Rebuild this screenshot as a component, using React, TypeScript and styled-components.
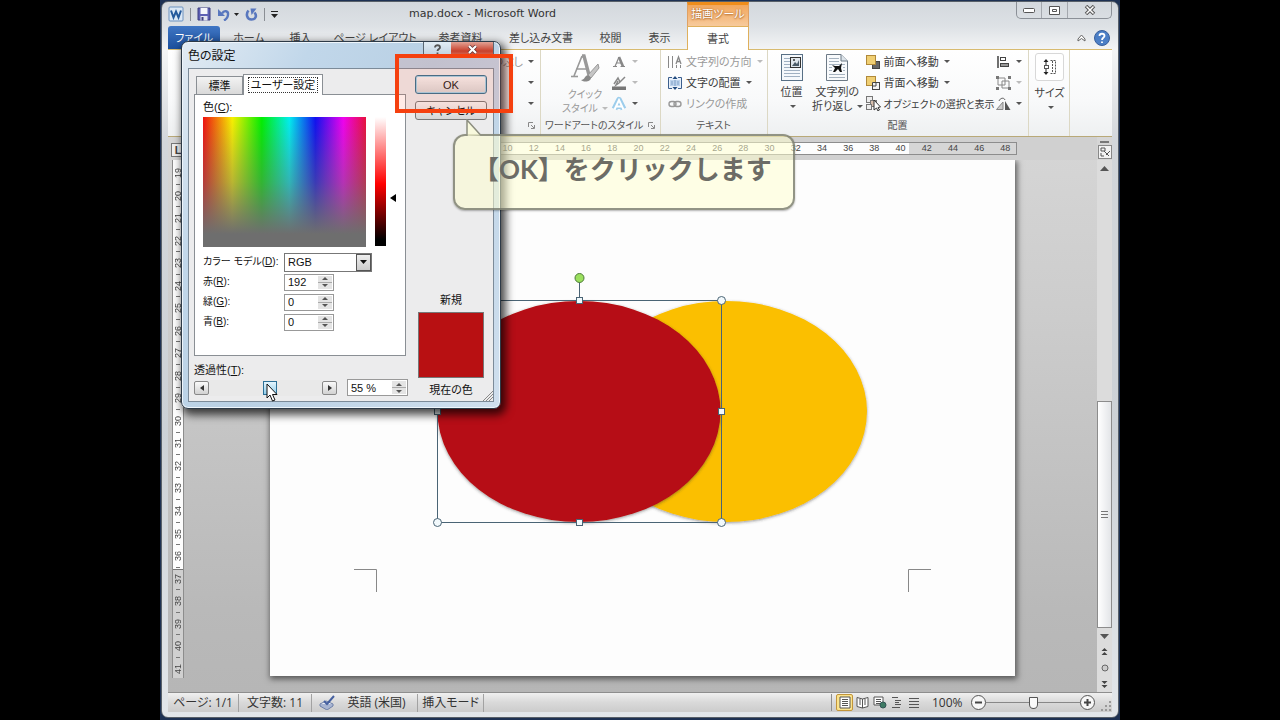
import React from 'react';
import styled, { createGlobalStyle, css } from 'styled-components';

const GlobalStyle = createGlobalStyle`
  * { box-sizing: border-box; }
  body {
    margin: 0;
    background: #000;
    color: #444;
    font: 12px/14px "Open Sans", "Noto Sans CJK JP", sans-serif;
    font-feature-settings: "palt";
  }
  button, input, select { font: inherit; color: inherit; font-feature-settings: inherit; margin: 0; }
  button { padding: 0; border: 0; background: none; white-space: nowrap; }
  svg { display: block; flex: none; }
`;

const Stage = styled.div`
  display: flex;
  justify-content: center;
  min-height: 100vh;
`;

const Desktop = styled.div`
  position: relative;
  display: flex;
  width: 75%;
  min-width: 952px;
  padding: 1px 1px 2px;
  background: #1d3153;
`;

const Frame = styled.main`
  display: flex;
  flex-direction: column;
  flex: 1;
  min-width: 0;
  padding: 0 6px 5px;
  border: 1px solid #586069;
  border-radius: 7px;
  background: linear-gradient(#d3d8dd, #dde1e5 24px, #f4f5f6 48px, #d2d6da 140px, #ccd1d6 60%, #e2e6ea);
`;

/* Title bar */
const TitleBar = styled.header`
  display: flex;
  height: 24px;
`;

const QuickAccess = styled.div`
  display: flex;
  align-items: center;
  gap: 6px;
  width: 110px;
  color: #222;
`;

const IconButton = styled.button`
  display: flex;
  align-items: center;
  gap: 4px;
`;

const Divider = styled.span`
  width: 1px;
  height: 13px;
  background: #8a8e94;
`;

const Title = styled.h1`
  width: 409px;
  margin: 0;
  font: 11px/24px "DejaVu Sans", sans-serif;
  text-align: center;
  color: #333;
`;

const ContextTitle = styled.div`
  width: 62px;
  border: 1px solid #e0a163;
  border-top: 3px solid #ef8d1b;
  border-bottom: 0;
  background: linear-gradient(#f2a75c, #f7ca9c);
  color: #fff;
  font-size: 11px;
  line-height: 18px;
  text-align: center;
  white-space: nowrap;
  text-shadow: 0 0 2px #a8622b, 0 1px 2px #b87333;
`;

const WindowButtons = styled.div`
  display: flex;
  height: 17px;
  margin-left: auto;
  border: 1px solid #8b9097;
  border-top: 0;
  border-radius: 0 0 5px 5px;
`;

const WindowButton = styled.button<{ $w: number }>`
  display: grid;
  place-items: center;
  width: ${p => p.$w}px;
  & + & { border-left: 1px solid #a4a8ae; }
`;

/* Ribbon tabs */
const TabRow = styled.nav`
  display: flex;
  height: 24px;
  border-bottom: 1px solid #d8bb70;
  font-size: 11px;
`;

const FileTab = styled.button`
  width: 52px;
  margin-right: 2px;
  border-radius: 3px 3px 0 0;
  background: linear-gradient(#3f76c4, #1c4f9c);
  color: #fff;
`;

const RibbonTab = styled.button<{ $w: number; $active?: boolean }>`
  width: ${p => p.$w}px;
  ${p => p.$active && css`
    height: 24px;
    margin-left: 3px;
    border: 1px solid #dfb05c;
    border-bottom: 0;
    background: #fff;
  `}
`;

const TabTools = styled.div`
  display: flex;
  align-items: center;
  gap: 8px;
  margin-left: auto;
  padding-right: 2px;
`;

/* Ribbon */
const Ribbon = styled.section`
  display: flex;
  height: 87px;
  border-bottom: 1px solid #b9a978;
  background: linear-gradient(#fff, #f8f9fa 60%, #eef0f1);
`;

const Group = styled.div<{ $w: number }>`
  display: flex;
  flex-direction: column;
  width: ${p => p.$w}px;
  border-right: 1px solid #dcd8c4;
  overflow: hidden;
`;

const GroupBody = styled.div<{ $pad?: number; $end?: boolean }>`
  display: flex;
  justify-content: ${p => (p.$end ? 'flex-end' : 'flex-start')};
  height: 67px;
  padding: 1px 6px 0 ${p => p.$pad ?? 6}px;
`;

const GroupLabel = styled.div`
  display: flex;
  justify-content: center;
  align-items: center;
  height: 16px;
  padding: 0 5px 0 4px;
  font-size: 10px;
  color: #555;
  white-space: nowrap;
  span { flex: 1; }
`;

const BigButton = styled.button<{ $w: number; $dim?: boolean }>`
  display: flex;
  flex-direction: column;
  align-items: center;
  width: ${p => p.$w}px;
  padding-top: 3px;
  line-height: 14px;
  color: ${p => (p.$dim ? '#999' : '#444')};
  font-size: ${p => (p.$dim ? 10 : 11)}px;
  svg { margin-bottom: 4px; }
`;

const Caption = styled.span`
  display: flex;
  justify-content: center;
  align-items: center;
  gap: 2px;
  min-height: 14px;
`;

const Rows = styled.div<{ $w?: number }>`
  display: flex;
  flex-direction: column;
  width: ${p => (p.$w ? `${p.$w}px` : 'auto')};
`;

const RowButton = styled.button<{ $dim?: boolean; $small?: boolean; $end?: boolean }>`
  display: flex;
  align-items: center;
  justify-content: ${p => (p.$end ? 'flex-end' : 'flex-start')};
  gap: 3px;
  height: 21px;
  color: ${p => (p.$dim ? '#999' : '#3c3c3c')};
  font-size: ${p => (p.$small ? 10 : 11)}px;
`;

const Caret = styled.i<{ $dim?: boolean }>`
  width: 0;
  height: 0;
  margin-left: 2px;
  border: 3px solid transparent;
  border-top-color: ${p => (p.$dim ? '#bbb' : '#555')};
  border-bottom: 0;
`;

const SizeTile = styled.span`
  display: grid;
  place-items: center;
  width: 29px;
  height: 28px;
  margin-bottom: 5px;
  border: 1px solid #d8d8d8;
  border-radius: 3px;
  background: #fff;
  svg { margin: 0; }
`;

/* Workspace */
const Workspace = styled.section`
  display: grid;
  grid-template-columns: 17px 1fr 15px;
  grid-template-rows: 23px 1fr;
  flex: 1;
  min-height: 555px;
  background: linear-gradient(#d6d6d6, #cdcdcd 30%, #b9b9b9 85%, #b6b6b6);
`;

const TabSelector = styled.button`
  width: 14px;
  height: 14px;
  margin: 6px 0 0 3px;
  border: 1px solid #777;
  background: #f0f0f0;
  font: bold 11px/12px "Liberation Sans", sans-serif;
`;

const RulerSlot = styled.div`
  display: flex;
  justify-content: center;
  padding: 5px 0 0 4px;
  background: #d0d0d0;
`;

const HorizontalRuler = styled.div`
  display: flex;
  justify-content: space-between;
  width: 747px;
  height: 13px;
  padding: 0 2px 0 98px;
  border: 1px solid #8d8d8d;
  background: linear-gradient(90deg, #d6d6d6 106px, #fdfdfd 106px, #fdfdfd 638px, #d6d6d6 638px);
  font: 9px/11px "Liberation Sans", sans-serif;
  color: #444;
  span { width: 16px; text-align: center; }
`;

const VerticalRuler = styled.div`
  display: flex;
  flex-direction: column;
  justify-content: space-between;
  width: 12px;
  height: 518px;
  margin-left: 4px;
  padding: 7px 0 3px;
  border: solid #8d8d8d;
  border-width: 0 1px;
  background: linear-gradient(#fdfdfd 409px, #777 409px, #777 410px, #d0d0d0 410px);
  font: 9px/10px "Liberation Sans", sans-serif;
  color: #444;
  span {
    height: 12px;
    writing-mode: vertical-rl;
    transform: rotate(180deg);
    text-align: center;
  }
  i { width: 4px; height: 1px; margin-left: 3px; background: #777; }
`;

const Canvas = styled.div`
  display: flex;
  justify-content: center;
  align-items: flex-start;
  padding-left: 2px;
`;

const Page = styled.article`
  width: 745px;
  height: 516px;
  background: #fdfdfd;
  box-shadow: 1px 2px 6px 1px #555;
  clip-path: inset(0 -12px -12px);
`;

const ScrollColumn = styled.div`
  display: flex;
  flex-direction: column;
  align-items: center;
  background: #dcdcdc;
  button { display: grid; place-items: center; width: 15px; height: 16px; flex: none; }
`;

const ScrollTrack = styled.div`
  display: flex;
  flex-direction: column;
  justify-content: flex-end;
  flex: 1;
  width: 15px;
`;

const ScrollThumb = styled.div`
  display: grid;
  place-items: center;
  height: 227px;
  border: 1px solid #8c8c8c;
  background: linear-gradient(90deg, #fff, #e3e5e8);
`;

const RulerToggle = styled.button`
  display: grid;
  place-items: center;
  align-self: end;
  width: 15px;
  height: 20px;
  &::before { content: ""; width: 9px; height: 2px; background: #777; }
`;

/* Status bar */
const StatusBar = styled.footer`
  display: flex;
  align-items: center;
  height: 20px;
  border-top: 1px solid #8e8e8e;
  background: linear-gradient(#f0f0f0, #d9d9d9 50%, #cccccc);
  color: #333;
`;

const StatusItem = styled.button<{ $w: number }>`
  width: ${p => p.$w}px;
  height: 18px;
  border-right: 1px solid #a2a2a2;
  text-align: center;
`;

const ProofButton = styled.button`
  padding-left: 7px;
`;

const ViewButtons = styled.div`
  display: flex;
  margin-left: auto;
  padding-left: 4px;
  border-left: 1px solid #8e8e8e;
`;

const ViewButton = styled.button<{ $on?: boolean }>`
  display: grid;
  place-items: center;
  width: 17px;
  height: 17px;
  margin-right: ${p => (p.$on ? 1 : 0)}px;
  border-radius: 2px;
  ${p => p.$on && css`border: 1px solid #c2953a; background: #fbe38c;`}
`;

const Zoom = styled.label`
  width: 39px;
  margin-left: 10px;
`;

const ZoomRange = styled.input`
  appearance: none;
  width: 94px;
  height: 14px;
  margin: 0;
  background: linear-gradient(#888, #888) center / 100% 1px no-repeat;
  &::-webkit-slider-thumb {
    appearance: none;
    width: 9px;
    height: 12px;
    border: 1px solid #555;
    border-radius: 1px 1px 5px 5px;
    background: #fafafa;
  }
`;

const RoundButton = styled.button`
  display: grid;
  place-items: center;
  width: 15px;
  height: 15px;
  border: 1px solid #555;
  border-radius: 50%;
  background: #f7f7f7;
`;

const CornerGrip = styled.span`
  align-self: flex-end;
  margin-left: 6px;
`;

/* Colour dialog */
const Dialog = styled.section`
  position: absolute;
  left: 21px;
  top: 41px;
  width: 320px;
  height: 368px;
  padding: 0 6px 6px;
  border: 1px solid #2d3a47;
  border-radius: 7px;
  background: linear-gradient(120deg, #e2ebf3, #c1d7ea 25%, #b9d0e4 50%, #cfdfee);
  box-shadow: 3px 4px 9px 2px rgba(0, 0, 0, .7), inset 0 0 0 1px #eef5fb;
  color: #111;
  font: 11px/14px "Liberation Sans", "Noto Sans CJK JP", sans-serif;
  font-feature-settings: "palt";
`;

const DialogHead = styled.header`
  display: flex;
  justify-content: space-between;
  height: 26px;
`;

const DialogTitle = styled.h2`
  margin: 0;
  font: 12px/25px "Noto Sans CJK JP", sans-serif;
  font-feature-settings: "palt";
`;

const DialogHeadButtons = styled.div`
  display: flex;
  height: 16px;
  border: 1px solid #5c6772;
  border-top: 0;
  border-radius: 0 0 4px 4px;
  overflow: hidden;
`;

const HeadButton = styled.button<{ $w: number; $red?: boolean }>`
  display: grid;
  place-items: center;
  width: ${p => p.$w}px;
  background: ${p => (p.$red ? 'linear-gradient(#e2a295, #c8402c 60%, #d97b66)' : 'linear-gradient(#e3edf5, #bccddc)')};
`;

const DialogBody = styled.form`
  display: flex;
  justify-content: space-between;
  height: 334px;
  padding: 6px 6px 0 5px;
  border: 1px solid #7c8b99;
  background: #ececed;
`;

const LeftPane = styled.div`
  display: flex;
  flex-direction: column;
  width: 214px;
`;

const DialogTabs = styled.div`
  display: flex;
  align-items: flex-end;
  height: 19px;
  padding-left: 2px;
`;

const DialogTab = styled.button<{ $w: number; $on?: boolean }>`
  position: relative;
  width: ${p => p.$w}px;
  height: 18px;
  border: 1px solid #8a8f94;
  border-bottom: 0;
  background: linear-gradient(#f3f3f3, #d9d9d9);
  ${p => p.$on && css`
    height: 21px;
    margin-bottom: -1px;
    padding: 2px 4px;
    background: #fff;
    span { display: block; border: 1px dotted #333; }
  `}
`;

const TabPanel = styled.div`
  width: 212px;
  height: 262px;
  padding: 5px 8px;
  border: 1px solid #8a8f94;
  background: #fff;
`;

const PickerRow = styled.div`
  display: flex;
  align-items: flex-start;
  gap: 9px;
  margin: 3px 0 5px;
`;

const Spectrum = styled.div`
  width: 163px;
  height: 130px;
  background:
    linear-gradient(rgba(110, 110, 110, 0), rgba(110, 110, 110, .45) 50%, #6e6e6e 90%),
    linear-gradient(90deg, #f01010, #f8f000 18%, #00f000 36%, #00eef0 53%, #1010f0 69%, #f000f0 86%, #e8103c);
`;

const Luminance = styled.div`
  width: 11px;
  height: 129px;
  background: linear-gradient(#fff, #f00 52%, #000 95%);
`;

const LuminanceMark = styled.i`
  margin: 77px 0 0 -5px;
  border: 4px solid transparent;
  border-left: 0;
  border-right: 6px solid #000;
`;

const Field = styled.div`
  display: flex;
  align-items: center;
  height: 20px;
  label { width: 81px; font-size: 10px; white-space: nowrap; }
`;

const SelectWrap = styled.span`
  position: relative;
  display: flex;
`;

const ModelSelect = styled.select`
  width: 88px;
  height: 19px;
  padding: 0 3px;
  appearance: none;
  border: 1px solid #777;
  border-radius: 0;
  background: #fff;
`;

const DropMark = styled.span`
  position: absolute;
  top: 1px;
  right: 1px;
  display: grid;
  place-items: center;
  width: 15px;
  height: 17px;
  border: 1px solid #555;
  background: linear-gradient(#eee, #ccc);
  pointer-events: none;
`;

const Spinner = styled.span<{ $w: number }>`
  display: flex;
  width: ${p => p.$w}px;
  height: 17px;
  padding: 1px;
  border: 1px solid #999;
  background: #fff;
  input {
    flex: 1;
    min-width: 0;
    padding: 0 0 0 2px;
    border: 0;
    outline: 0;
    background: none;
  }
`;

const Arrows = styled.span`
  display: flex;
  flex-direction: column;
  gap: 1px;
  width: 14px;
  background: #aaa;
  button { display: grid; place-items: center; flex: 1; background: #e4e4e4; }
`;

const TransparencyLabel = styled.label`
  margin: 7px 0 2px;
`;

const TransparencyRow = styled.div`
  display: flex;
  align-items: center;
  justify-content: space-between;
`;

const SliderGroup = styled.div`
  display: flex;
  align-items: center;
  width: 143px;
`;

const StepButton = styled.button`
  display: grid;
  place-items: center;
  width: 15px;
  height: 14px;
  border: 1px solid #888;
  border-radius: 2px;
  background: linear-gradient(#fafafa, #d2d2d2);
`;

const Slider = styled.input`
  appearance: none;
  flex: 1;
  min-width: 0;
  height: 16px;
  margin: 0;
  background: #e9e9e9;
  &::-webkit-slider-thumb {
    appearance: none;
    width: 14px;
    height: 14px;
    border: 1px solid #2b6f96;
    background: linear-gradient(#e4f5fd, #8fcdec);
  }
`;

const RightPane = styled.div`
  display: flex;
  flex-direction: column;
  align-items: center;
  width: 72px;
`;

const PushButton = styled.button<{ $default?: boolean }>`
  width: 72px;
  height: 19px;
  margin-bottom: 7px;
  border: 1px solid ${p => (p.$default ? '#2f6f8f' : '#777')};
  border-radius: 3px;
  background: linear-gradient(#f6f6f6, #d6d6d6);
  ${p => p.$default && css`box-shadow: inset 0 0 0 1px #9dd3ea;`}
`;

const Swatches = styled.div`
  display: flex;
  flex-direction: column;
  align-items: center;
  gap: 5px;
  margin-top: 166px;
  white-space: nowrap;
`;

const Swatch = styled.div`
  width: 66px;
  height: 66px;
  border: 1px solid #777;
  background: #b81012;
`;

const ResizeGrip = styled.span`
  position: absolute;
  right: 7px;
  bottom: 7px;
`;

/* Tutorial overlays */
const Highlight = styled.div`
  position: absolute;
  left: 235px;
  top: 54px;
  width: 118px;
  height: 59px;
  border: 4px solid #f5400f;
  background: rgba(255, 90, 60, .13);
`;

const Callout = styled.aside`
  position: absolute;
  left: 293px;
  top: 134px;
  width: 342px;
  height: 76px;
  padding: 18px 0 0 18px;
  border: 2px solid rgba(110, 112, 100, .75);
  border-radius: 12px;
  background: rgba(255, 255, 208, .52);
  box-shadow: 0 1px 2px rgba(0, 0, 0, .3);
  color: #6c6c66;
  font: bold 26px/30px Lato, "Noto Sans CJK JP", sans-serif;
  font-feature-settings: normal;
  white-space: nowrap;
`;

const CalloutTail = styled.span`
  position: absolute;
  left: 11px;
  top: -17px;
`;

const Pointer = styled.span`
  position: absolute;
  left: 106px;
  top: 383px;
`;

const Tri = ({ up, color = '#555', w = 7, h = 4 }: { up?: boolean; color?: string; w?: number; h?: number }) => (
  <svg width={w} height={h} viewBox="0 0 8 4" preserveAspectRatio="none">
    <path d={up ? 'M0 4L4 0L8 4Z' : 'M0 0L4 4L8 0Z'} fill={color} />
  </svg>
);

const WordIcon = () => (
  <svg width="16" height="16" viewBox="0 0 16 16">
    <rect x="1" y="1" width="14" height="14" rx="1" fill="#dbe8f5" stroke="#6d93c0" />
    <path d="M3 4.500L5.500 11.500L8 5.500L10.500 11.500L13 4.500" fill="none" stroke="#245a9c" strokeWidth="2" />
  </svg>
);

const SaveIcon = () => (
  <svg width="14" height="14" viewBox="0 0 14 14">
    <path d="M1 1H13V13H1Z" fill="#5d5fb4" stroke="#3d3f80" />
    <rect x="3.500" y="1" width="7" height="6" fill="#f4f5fb" />
    <rect x="3.500" y="9" width="7" height="4.500" fill="#e1e3f0" />
    <rect x="4.500" y="10" width="2" height="3.500" fill="#3d3f80" />
  </svg>
);

const UndoIcon = () => (
  <svg width="13" height="13" viewBox="0 0 13 13">
    <path d="M5 5.500C7 2 11.500 2.500 11 6.500C11 9 9.500 11 7 12.500" fill="none" stroke="#5877be" strokeWidth="2.400" />
    <path d="M1 1V8H8Z" fill="#5877be" />
  </svg>
);

const RedoIcon = () => (
  <svg width="13" height="13" viewBox="0 0 13 13">
    <path d="M3.500 2.500C0.500 6 2 11.500 6.500 11.500C11 11.500 12 7.500 9.500 4.500" fill="none" stroke="#5877be" strokeWidth="2.600" />
    <path d="M5.500 0.500H11.500L6.500 7Z" fill="#5877be" />
  </svg>
);

const QuickStyleIcon = () => (
  <svg width="30" height="29" viewBox="0 0 30 29">
    <path d="M12 2L4 22M6 15H16" fill="none" stroke="#999" strokeWidth="1.600" />
    <path d="M12 2H14L19 21" fill="none" stroke="#999" strokeWidth="3.400" />
    <path d="M1 22.500H8" stroke="#999" strokeWidth="1.600" />
    <path d="M28 10L18 21L21 24L29 14Z" fill="#c5c5c5" stroke="#999" />
    <path d="M18 21C14 22 15 26 11 26C15 29 21 27 21 24Z" fill="#888" />
  </svg>
);

const LetterIcon = ({ kind }: { kind: 'fill' | 'outline' | 'glow' }) => (
  <svg width="16" height="16" viewBox="0 0 16 16">
    {kind === 'fill' && <><path d="M8 3L4 12.500M5.500 9H10.500M2 12.500H6M9.500 12.500H14" fill="none" stroke="#888" strokeWidth="1.200" /><path d="M8 3L12 12.500" stroke="#888" strokeWidth="2.600" /></>}
    {kind === 'outline' && <><path d="M3 9L7 3L9 7M14 2L8 8L5 10L7 6" fill="none" stroke="#888" strokeWidth="1.500" /><rect x="1" y="11.500" width="14" height="3.500" fill="#777" /></>}
    {kind === 'glow' && <><path d="M3.500 13L8 4L12.500 13M5.500 10H10.500" fill="none" stroke="#9ccdec" strokeWidth="6" strokeLinejoin="round" /><path d="M3.500 13.500L8 4L12.500 13.500M5.500 10.500H10.500" fill="none" stroke="#fff" strokeWidth="2" /></>}
  </svg>
);

const TextDirectionIcon = () => (
  <svg width="16" height="14" viewBox="0 0 16 14">
    <path d="M1.500 1V13M5.500 1V13M9.500 10V13M13.500 10V13" stroke="#888" />
    <path d="M9 9L11.500 2L14 9M10 6.500H13" fill="none" stroke="#888" strokeWidth="1.300" />
  </svg>
);

const TextAlignIcon = () => (
  <svg width="16" height="14" viewBox="0 0 16 14">
    <rect x="1.500" y="1.500" width="13" height="11" fill="#e8f0fa" />
    <path d="M5 1.500H1.500V12.500H5M11 1.500H14.500V12.500H11" fill="none" stroke="#3c5f8e" />
    <rect x="3" y="4" width="10" height="6" fill="#bcd2ec" />
    <path d="M5 5V9M11 5V9M8 4V10" stroke="#7f9fc6" />
    <path d="M8 0L5.500 3H10.500ZM8 14L5.500 11H10.500Z" fill="#234c80" />
  </svg>
);

const LinkIcon = () => (
  <svg width="16" height="10" viewBox="0 0 16 10">
    <rect x="2" y="2.500" width="7" height="5" rx="2.500" fill="none" stroke="#999" strokeWidth="1.400" />
    <rect x="7" y="2.500" width="7" height="5" rx="2.500" fill="none" stroke="#999" strokeWidth="1.400" />
  </svg>
);

const PositionIcon = () => (
  <svg width="22" height="27" viewBox="0 0 22 27">
    <rect x="0.500" y="0.500" width="21" height="26" fill="#f4f8fc" stroke="#587086" />
    <path d="M3 4.500H9M3 7.500H9M3 10.500H9M3 13.500H9M3 16.500H19M3 19.500H19M3 22.500H19" stroke="#9fb0c2" />
    <rect x="9.500" y="3.500" width="10" height="10" fill="#dfe6ec" stroke="#333" />
    <path d="M11 12L14 8L16 10L18 6V12Z" fill="#4b5b68" />
    <circle cx="13" cy="6" r="1" fill="#333" />
  </svg>
);

const WrapIcon = () => (
  <svg width="22" height="27" viewBox="0 0 22 27">
    <path d="M0.500 0.500H15L21.500 7V26.500H0.500Z" fill="#f8fafc" stroke="#6d7a86" />
    <path d="M15 0.500V7H21.500" fill="#dde4ea" stroke="#6d7a86" />
    <path d="M3 4.500H13M3 7.500H13M3 10.500H19M3 13.500H6M17 13.500H19M3 16.500H6M17 16.500H19M3 20.500H19M3 23.500H19" stroke="#a5b2bf" />
    <path d="M6 11L9 12L13 12L16 9L15 14L16 18H14L12 15L9 18H7L9 14Z" fill="#111" />
  </svg>
);

const LayerIcon = ({ back }: { back?: boolean }) => (
  <svg width="15" height="14" viewBox="0 0 15 14">
    <rect x="6.500" y="6.500" width="7" height="7" fill={back ? '#f4f4f4' : '#666'} stroke="#444" />
    <rect x="0.500" y="0.500" width="9" height="9" fill="#f0cf73" stroke="#b0893a" />
    {back && <path d="M6.500 10V6.500H10V10Z" fill="#f4f4f4" stroke="#444" />}
  </svg>
);

const SelectPaneIcon = () => (
  <svg width="15" height="15" viewBox="0 0 15 15">
    <rect x="0.500" y="0.500" width="6" height="6" fill="#eee" stroke="#777" />
    <rect x="4.500" y="4.500" width="6" height="6" fill="#d8bfae" stroke="#777" />
    <rect x="0.500" y="8.500" width="5" height="5" fill="#eee" stroke="#777" />
    <path d="M8 4V14L10.500 12L12 15L13.500 14L12 11.500L14.500 11Z" fill="#fff" stroke="#333" />
  </svg>
);

const ArrangeIcon = ({ kind }: { kind: 'align' | 'group' | 'rotate' }) => (
  <svg width="15" height="14" viewBox="0 0 15 14">
    {kind === 'align' && <><path d="M2 1V13" stroke="#333" strokeWidth="1.400" /><rect x="4.500" y="2.500" width="5" height="3" fill="#fff" stroke="#444" /><rect x="4.500" y="8.500" width="8" height="3" fill="#999" stroke="#444" /></>}
    {kind === 'group' && <><path d="M2 2H9V9H2ZM6 5H13V12H6Z" fill="none" stroke="#888" /><path d="M0 0H3V3H0ZM12 0H15V3H12ZM0 11H3V14H0ZM12 11H15V14H12Z" fill="#777" /></>}
    {kind === 'rotate' && <><path d="M7 5V12.500H0.500Z" fill="#ccc" stroke="#888" /><path d="M9 4L14.500 13H9Z" fill="#555" /><path d="M3 4C4 1 8 0 9 3" fill="none" stroke="#666" /></>}
  </svg>
);

const SizeIcon = () => (
  <svg width="14" height="16" viewBox="0 0 14 16">
    <path d="M3 0L0.500 3H5.500ZM3 16L0.500 13H5.500Z" fill="#222" />
    <path d="M3 3V6M3 10V13" stroke="#222" />
    <rect x="1.500" y="6.500" width="4" height="3" fill="#fff" stroke="#555" />
    <path d="M7.500 1.500H12.500V14.500H7.500M9.500 2V14" fill="none" stroke="#555" strokeDasharray="2 1" />
  </svg>
);

const Launcher = () => (
  <svg width="7" height="7" viewBox="0 0 7 7">
    <path d="M0.500 5V0.500H5M3 3L6 6M6.500 3V6.500H3" fill="none" stroke="#888" />
  </svg>
);

const viewPaths = [
  'M2 1H12V12H2ZM4 3.500H10M4 5.500H10M4 7.500H10M4 9.500H10',
  'M6.500 3V12M6.500 3L1 1.500V10.500L6.500 12L12 10.500V1.500ZM3 4H5M3 6H5M3 8H5M8 4H10M8 6H10M8 8H10',
  'M1 1H10V9H1ZM3 3.500H8M3 5.500H8M3 7.500H8',
  'M2 1.500H8M5 4.500H11M5 6.500H9M5 8.500H11M2 11.500H10',
  'M2 2.500H12M2 5.500H12M2 8.500H12M2 11.500H12',
];
const viewNames = ['印刷レイアウト', '全画面閲覧', 'Web レイアウト', 'アウトライン', '下書き'];

const ViewIcon = ({ i }: { i: number }) => (
  <svg width="14" height="13" viewBox="0 0 14 13">
    <path d={viewPaths[i]} fill={i < 3 ? '#fff' : 'none'} stroke="#555" />
    {i === 2 && <circle cx="10" cy="9" r="3" fill="#3d7a63" stroke="#355" />}
  </svg>
);

const ProofIcon = () => (
  <svg width="17" height="15" viewBox="0 0 17 15">
    <path d="M1 9L7 6L14 9L8 13Z" fill="#eef2fa" stroke="#6d7fa8" />
    <path d="M1 9V11L8 15L14 11V9" fill="#a8b5d2" stroke="#6d7fa8" />
    <path d="M5 6L8 9L15 1" fill="none" stroke="#4560a0" strokeWidth="2" />
  </svg>
);

const SpinArrows = ({ name }: { name: string }) => (
  <Arrows>
    <button type="button" aria-label={`${name} +`}><Tri up w={6} h={3} /></button>
    <button type="button" aria-label={`${name} -`}><Tri w={6} h={3} /></button>
  </Arrows>
);

const tabs: [string, number][] = [
  ['ホーム', 54], ['挿入', 49], ['ページ レイアウト', 100], ['参考資料', 71],
  ['差し込み文書', 90], ['校閲', 49], ['表示', 49],
];
const channels: [string, string, string][] = [['赤', 'R', '192'], ['緑', 'G', '0'], ['青', 'B', '0']];
const horizontalMarks = Array.from({ length: 25 }, (_, i) => i * 2);
const verticalMarks = Array.from({ length: 23 }, (_, i) => i + 19);
const squares = [[309, 140], [309, 362], [451, 251], [167, 251]];
const circles = [[451, 140], [167, 362], [451, 362], [167, 140]];

const Drawing = () => (
  <svg width="745" height="516" viewBox="0 0 745 516">
    <defs>
      <filter id="soft" x="-10%" y="-10%" width="120%" height="120%">
        <feDropShadow dx="0" dy="1" stdDeviation="1.500" floodColor="#333" floodOpacity="0.5" />
      </filter>
    </defs>
    <ellipse cx="456" cy="251.500" rx="141" ry="110.500" fill="#fbbf00" filter="url(#soft)" />
    <ellipse cx="309" cy="251.500" rx="141.500" ry="110.500" fill="#b61012" filter="url(#soft)" />
    <path d="M167.500 140.500H451.500V362.500H167.500ZM309.500 118V140" fill="none" stroke="#4a6475" />
    {squares.map(([x, y]) => <rect key={`${x}-${y}`} x={x - 2.5} y={y - 2.5} width="6" height="6" fill="#f2f9fc" stroke="#4a6475" />)}
    {circles.map(([x, y]) => <circle key={`${x}-${y}`} cx={x + 0.5} cy={y + 0.5} r="4" fill="#f2f9fc" stroke="#4a6475" />)}
    <circle cx="309.500" cy="118" r="4.500" fill="#9be05e" stroke="#4d7a3a" />
    <path d="M84 409.500H106.500V432M661 409.500H638.500V432" fill="none" stroke="#888" />
  </svg>
);

export default function App() {
  return (
    <Stage>
      <GlobalStyle />
      <Desktop>
        <Frame>
          <TitleBar>
            <QuickAccess>
              <WordIcon />
              <Divider />
              <IconButton aria-label="上書き保存"><SaveIcon /></IconButton>
              <IconButton aria-label="元に戻す"><UndoIcon /><Tri color="#222" w={5} h={3} /></IconButton>
              <IconButton aria-label="やり直し"><RedoIcon /></IconButton>
              <Divider />
              <IconButton aria-label="クイック アクセスのカスタマイズ">
                <svg width="7" height="7" viewBox="0 0 7 7"><path d="M0 0H7V1H0ZM0 3H7L3.500 7Z" fill="#222" /></svg>
              </IconButton>
            </QuickAccess>
            <Title>map.docx - Microsoft Word</Title>
            <ContextTitle>描画ツール</ContextTitle>
            <WindowButtons>
              <WindowButton $w={24} aria-label="最小化">
                <svg width="12" height="5" viewBox="0 0 12 5"><rect x="0.500" y="0.500" width="11" height="4" rx="1" fill="#fff" stroke="#555" /></svg>
              </WindowButton>
              <WindowButton $w={26} aria-label="最大化">
                <svg width="11" height="9" viewBox="0 0 11 9"><path d="M0.500 0.500H10.500V8.500H0.500ZM3.500 3.500H7.500V5.500H3.500Z" fill="#fff" stroke="#555" /></svg>
              </WindowButton>
              <WindowButton $w={44} aria-label="閉じる">
                <svg width="12" height="10" viewBox="0 0 12 10"><path d="M2 1L10 9M10 1L2 9" stroke="#555" strokeWidth="3.500" /><path d="M2.500 1.500L9.500 8.500M9.500 1.500L2.500 8.500" stroke="#fff" strokeWidth="1.500" /></svg>
              </WindowButton>
            </WindowButtons>
          </TitleBar>

          <TabRow>
            <FileTab>ファイル</FileTab>
            {tabs.map(([name, w]) => <RibbonTab key={name} $w={w}>{name}</RibbonTab>)}
            <RibbonTab $w={62} $active>書式</RibbonTab>
            <TabTools>
              <IconButton aria-label="リボンの最小化">
                <svg width="9" height="8" viewBox="0 0 9 8"><path d="M1 5L4.500 1L8 5V7L4.500 4.500L1 7Z" fill="#fff" stroke="#666" /></svg>
              </IconButton>
              <IconButton aria-label="ヘルプ">
                <svg width="16" height="16" viewBox="0 0 16 16"><circle cx="8" cy="8" r="7.500" fill="#4c7fc6" stroke="#385f9c" /><path d="M5.500 6C5.500 3 10.500 3 10.500 6C10.500 7.500 8 7.500 8 10M8 11.500V13" fill="none" stroke="#fff" strokeWidth="1.800" /></svg>
              </IconButton>
            </TabTools>
          </TabRow>

          <Ribbon>
            <Group $w={373}>
              <GroupBody $end>
                <Rows>
                  <RowButton $end $dim>塗りつぶし<Caret /></RowButton>
                  <RowButton $end aria-label="図形の枠線"><Caret /></RowButton>
                  <RowButton $end aria-label="図形の効果"><Caret /></RowButton>
                </Rows>
              </GroupBody>
              <GroupLabel><span /><Launcher /></GroupLabel>
            </Group>
            <Group $w={120}>
              <GroupBody $pad={18}>
                <BigButton $w={52} $dim>
                  <QuickStyleIcon />
                  <Caption>クイック</Caption>
                  <Caption>スタイル<Caret $dim /></Caption>
                </BigButton>
                <Rows>
                  <RowButton aria-label="文字の塗りつぶし"><LetterIcon kind="fill" /><Caret $dim /></RowButton>
                  <RowButton aria-label="文字の輪郭"><LetterIcon kind="outline" /><Caret $dim /></RowButton>
                  <RowButton aria-label="文字の効果"><LetterIcon kind="glow" /><Caret /></RowButton>
                </Rows>
              </GroupBody>
              <GroupLabel><span>ワードアートのスタイル</span><Launcher /></GroupLabel>
            </Group>
            <Group $w={107}>
              <GroupBody>
                <Rows>
                  <RowButton $dim><TextDirectionIcon />文字列の方向<Caret $dim /></RowButton>
                  <RowButton><TextAlignIcon />文字の配置<Caret /></RowButton>
                  <RowButton $dim><LinkIcon />リンクの作成</RowButton>
                </Rows>
              </GroupBody>
              <GroupLabel>テキスト</GroupLabel>
            </Group>
            <Group $w={261}>
              <GroupBody>
                <BigButton $w={36}><PositionIcon /><Caption>位置</Caption><Caption><Caret /></Caption></BigButton>
                <BigButton $w={58}><WrapIcon /><Caption>文字列の</Caption><Caption>折り返し<Caret /></Caption></BigButton>
                <Rows $w={134}>
                  <RowButton><LayerIcon />前面へ移動<Caret /></RowButton>
                  <RowButton><LayerIcon back />背面へ移動<Caret /></RowButton>
                  <RowButton $small><SelectPaneIcon />オブジェクトの選択と表示</RowButton>
                </Rows>
                <Rows>
                  <RowButton aria-label="配置"><ArrangeIcon kind="align" /><Caret /></RowButton>
                  <RowButton aria-label="グループ化"><ArrangeIcon kind="group" /><Caret $dim /></RowButton>
                  <RowButton aria-label="回転"><ArrangeIcon kind="rotate" /><Caret /></RowButton>
                </Rows>
              </GroupBody>
              <GroupLabel>配置</GroupLabel>
            </Group>
            <Group $w={41}>
              <BigButton $w={41}><SizeTile><SizeIcon /></SizeTile><Caption>サイズ</Caption><Caption><Caret /></Caption></BigButton>
            </Group>
          </Ribbon>

          <Workspace>
            <TabSelector aria-label="タブ セレクター">L</TabSelector>
            <RulerSlot>
              <HorizontalRuler>{horizontalMarks.map(n => <span key={n}>{n}</span>)}</HorizontalRuler>
            </RulerSlot>
            <RulerToggle aria-label="ルーラー">
              <svg width="14" height="14" viewBox="0 0 14 14"><rect x="0.500" y="0.500" width="13" height="13" fill="#f3f3f3" stroke="#888" /><path d="M3 3H7V6H3ZM6 6L11 11M8 10L12 6M3 8V11H6" fill="none" stroke="#555" /></svg>
            </RulerToggle>
            <VerticalRuler>
              {verticalMarks.map(n => (
                <React.Fragment key={n}>{n > 19 && <i />}<span>{n}</span></React.Fragment>
              ))}
            </VerticalRuler>
            <Canvas><Page><Drawing /></Page></Canvas>
            <ScrollColumn>
              <button aria-label="上へ"><Tri up w={9} h={5} /></button>
              <ScrollTrack>
                <ScrollThumb>
                  <svg width="7" height="7" viewBox="0 0 7 7"><path d="M0 0.500H7M0 3.500H7M0 6.500H7" stroke="#777" /></svg>
                </ScrollThumb>
              </ScrollTrack>
              <button aria-label="下へ"><Tri w={9} h={5} /></button>
              <button aria-label="前のページ"><svg width="7" height="8" viewBox="0 0 7 8"><path d="M3.500 0L6.500 3H0.500ZM3.500 4L6.500 7H0.500Z" fill="#444" /></svg></button>
              <button aria-label="オブジェクトの選択"><svg width="8" height="8" viewBox="0 0 8 8"><circle cx="4" cy="4" r="3" fill="#ccc" stroke="#666" /></svg></button>
              <button aria-label="次のページ"><svg width="7" height="8" viewBox="0 0 7 8"><path d="M3.500 4L6.500 1H0.500ZM3.500 8L6.500 5H0.500Z" fill="#444" /></svg></button>
            </ScrollColumn>
          </Workspace>

          <StatusBar>
            <StatusItem $w={71}>ページ: 1/1</StatusItem>
            <StatusItem $w={73}>文字数: 11</StatusItem>
            <ProofButton aria-label="文章校正"><ProofIcon /></ProofButton>
            <StatusItem $w={82}>英語 (米国)</StatusItem>
            <StatusItem $w={66}>挿入モード</StatusItem>
            <ViewButtons>
              {viewNames.map((name, i) => <ViewButton key={name} $on={i === 0} aria-label={name}><ViewIcon i={i} /></ViewButton>)}
            </ViewButtons>
            <Zoom htmlFor="zoom">100%</Zoom>
            <RoundButton aria-label="縮小"><svg width="9" height="9" viewBox="0 0 9 9"><path d="M1 4.500H8" stroke="#444" strokeWidth="2" /></svg></RoundButton>
            <ZoomRange id="zoom" type="range" defaultValue={50} />
            <RoundButton aria-label="拡大"><svg width="9" height="9" viewBox="0 0 9 9"><path d="M1 4.500H8M4.500 1V8" stroke="#444" strokeWidth="2" /></svg></RoundButton>
            <CornerGrip>
              <svg width="11" height="11" viewBox="0 0 11 11"><path d="M8 0H10V2H8ZM4 4H6V6H4ZM8 4H10V6H8ZM0 8H2V10H0ZM4 8H6V10H4ZM8 8H10V10H8Z" fill="#999" /></svg>
            </CornerGrip>
          </StatusBar>
        </Frame>

        <Dialog aria-label="色の設定">
          <DialogHead>
            <DialogTitle>色の設定</DialogTitle>
            <DialogHeadButtons>
              <HeadButton $w={27} aria-label="ヘルプ">
                <svg width="9" height="11" viewBox="0 0 9 11"><path d="M2 3.500C2 0.500 7 0.500 7 3.500C7 5 4.500 5 4.500 7M4.500 8.500V10.500" fill="none" stroke="#555" strokeWidth="1.800" /></svg>
              </HeadButton>
              <HeadButton $w={42} $red aria-label="閉じる">
                <svg width="11" height="9" viewBox="0 0 11 9"><path d="M2 1L9 8M9 1L2 8" stroke="#633" strokeWidth="3.600" /><path d="M2 1L9 8M9 1L2 8" stroke="#fff" strokeWidth="2.200" /></svg>
              </HeadButton>
            </DialogHeadButtons>
          </DialogHead>
          <DialogBody onSubmit={e => e.preventDefault()}>
            <LeftPane>
              <DialogTabs>
                <DialogTab type="button" $w={47}>標準</DialogTab>
                <DialogTab type="button" $w={80} $on><span>ユーザー設定</span></DialogTab>
              </DialogTabs>
              <TabPanel>
                <div>色(<u>C</u>):</div>
                <PickerRow>
                  <Spectrum />
                  <Luminance />
                  <LuminanceMark />
                </PickerRow>
                <Field>
                  <label htmlFor="model">カラー モデル(<u>D</u>):</label>
                  <SelectWrap>
                    <ModelSelect id="model"><option>RGB</option></ModelSelect>
                    <DropMark><Tri color="#111" w={7} h={4} /></DropMark>
                  </SelectWrap>
                </Field>
                {channels.map(([name, key, value]) => (
                  <Field key={key}>
                    <label htmlFor={key}>{name}(<u>{key}</u>):</label>
                    <Spinner $w={50}><input id={key} defaultValue={value} /><SpinArrows name={name} /></Spinner>
                  </Field>
                ))}
              </TabPanel>
              <TransparencyLabel htmlFor="transparency">透過性(<u>T</u>):</TransparencyLabel>
              <TransparencyRow>
                <SliderGroup>
                  <StepButton type="button" aria-label="減らす"><svg width="4" height="6" viewBox="0 0 4 6"><path d="M4 0V6L0 3Z" fill="#333" /></svg></StepButton>
                  <Slider id="transparency" type="range" defaultValue={55} />
                  <StepButton type="button" aria-label="増やす"><svg width="4" height="6" viewBox="0 0 4 6"><path d="M0 0V6L4 3Z" fill="#333" /></svg></StepButton>
                </SliderGroup>
                <Spinner $w={61}><input aria-label="透過性" defaultValue="55 %" /><SpinArrows name="透過性" /></Spinner>
              </TransparencyRow>
            </LeftPane>
            <RightPane>
              <PushButton $default>OK</PushButton>
              <PushButton type="button">キャンセル</PushButton>
              <Swatches>
                <span>新規</span>
                <Swatch />
                <span>現在の色</span>
              </Swatches>
            </RightPane>
          </DialogBody>
          <ResizeGrip>
            <svg width="10" height="10" viewBox="0 0 10 10"><path d="M0 10L10 0M3 10L10 3M6 10L10 6" stroke="#888" /></svg>
          </ResizeGrip>
        </Dialog>

        <Highlight />
        <Callout>
          <CalloutTail>
            <svg width="18" height="17" viewBox="0 0 18 17"><path d="M1 17V1L15 16.500" fill="rgba(253,255,214,.7)" stroke="#8c8e80" strokeWidth="1.500" /></svg>
          </CalloutTail>
          【OK】をクリックします
        </Callout>
        <Pointer>
          <svg width="12" height="19" viewBox="0 0 12 19"><path d="M1 1V15L4 12L6.500 18L9 17L6.500 11.500H11Z" fill="#fff" stroke="#111" /></svg>
        </Pointer>
      </Desktop>
    </Stage>
  );
}
